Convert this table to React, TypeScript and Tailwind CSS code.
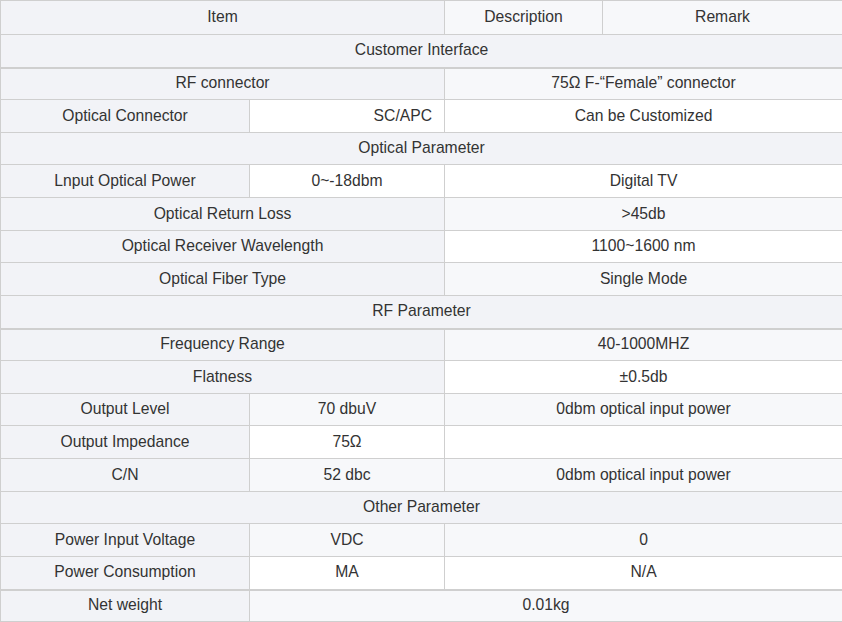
type Cell = { text: string; span?: number; align?: 'right' };
type Row = { kind: 'head' | 'section' | 'data'; cells: Cell[]; thick?: boolean; h: number };

const rows: Row[] = [
  { kind: 'head', h: 34, cells: [{ text: 'Item', span: 2 }, { text: 'Description' }, { text: 'Remark' }] },
  { kind: 'section', h: 33, thick: true, cells: [{ text: 'Customer Interface', span: 4 }] },
  { kind: 'data', h: 32, cells: [{ text: 'RF connector', span: 2 }, { text: '75Ω F-“Female” connector', span: 2 }] },
  { kind: 'data', h: 33, cells: [{ text: 'Optical Connector' }, { text: 'SC/APC', align: 'right' }, { text: 'Can be Customized', span: 2 }] },
  { kind: 'section', h: 32, cells: [{ text: 'Optical Parameter', span: 4 }] },
  { kind: 'data', h: 33, cells: [{ text: 'Lnput Optical Power' }, { text: '0~-18dbm' }, { text: 'Digital TV', span: 2 }] },
  { kind: 'data', h: 33, cells: [{ text: 'Optical Return Loss', span: 2 }, { text: '>45db', span: 2 }] },
  { kind: 'data', h: 32, cells: [{ text: 'Optical Receiver Wavelength', span: 2 }, { text: '1100~1600 nm', span: 2 }] },
  { kind: 'data', h: 33, cells: [{ text: 'Optical Fiber Type', span: 2 }, { text: 'Single Mode', span: 2 }] },
  { kind: 'section', h: 33, thick: true, cells: [{ text: 'RF Parameter', span: 4 }] },
  { kind: 'data', h: 32, cells: [{ text: 'Frequency Range', span: 2 }, { text: '40-1000MHZ', span: 2 }] },
  { kind: 'data', h: 33, cells: [{ text: 'Flatness', span: 2 }, { text: '±0.5db', span: 2 }] },
  { kind: 'data', h: 32, cells: [{ text: 'Output Level' }, { text: '70 dbuV' }, { text: '0dbm optical input power', span: 2 }] },
  { kind: 'data', h: 33, cells: [{ text: 'Output Impedance' }, { text: '75Ω' }, { text: '', span: 2 }] },
  { kind: 'data', h: 33, cells: [{ text: 'C/N' }, { text: '52 dbc' }, { text: '0dbm optical input power', span: 2 }] },
  { kind: 'section', h: 32, cells: [{ text: 'Other Parameter', span: 4 }] },
  { kind: 'data', h: 33, cells: [{ text: 'Power Input Voltage' }, { text: 'VDC' }, { text: '0', span: 2 }] },
  { kind: 'data', h: 33, thick: true, cells: [{ text: 'Power Consumption' }, { text: 'MA' }, { text: 'N/A', span: 2 }] },
  { kind: 'data', h: 32, cells: [{ text: 'Net weight' }, { text: '0.01kg', span: 3 }] },
];

export default function App() {
  return (
    <div className="w-[842px] bg-white text-[15.7px] leading-[18px] text-[#333333] [font-family:'Liberation_Sans',Arial,sans-serif]">
      <table className="w-[842px] table-fixed border-collapse">
        <colgroup>
          <col className="w-[249px]" />
          <col className="w-[195px]" />
          <col className="w-[158px]" />
          <col className="w-[240px]" />
        </colgroup>
        <tbody>
          {rows.map((row, i) => {
            // odd rows (1-based) are shaded, even rows are white; first column and sections always shaded
            const striped = i % 2 === 0;
            const rowBg = row.kind === 'section' ? 'bg-[#f2f3f7]' : striped ? 'bg-[#f7f8fa]' : 'bg-white';
            return (
              <tr key={i} className={rowBg} style={{ height: row.h }}>
                {row.cells.map((c, j) => (
                  <td
                    key={j}
                    colSpan={c.span}
                    className={[
                      'border border-[#cfcfcf] p-0 pb-px align-middle',
                      row.thick ? 'border-b-2' : '',
                      c.align === 'right' ? 'pr-3 text-right' : 'text-center',
                      j === 0 && row.kind !== 'section' ? 'bg-[#f2f3f7]' : '',
                    ].join(' ')}
                  >
                    {c.text}
                  </td>
                ))}
              </tr>
            );
          })}
        </tbody>
      </table>
    </div>
  );
}
